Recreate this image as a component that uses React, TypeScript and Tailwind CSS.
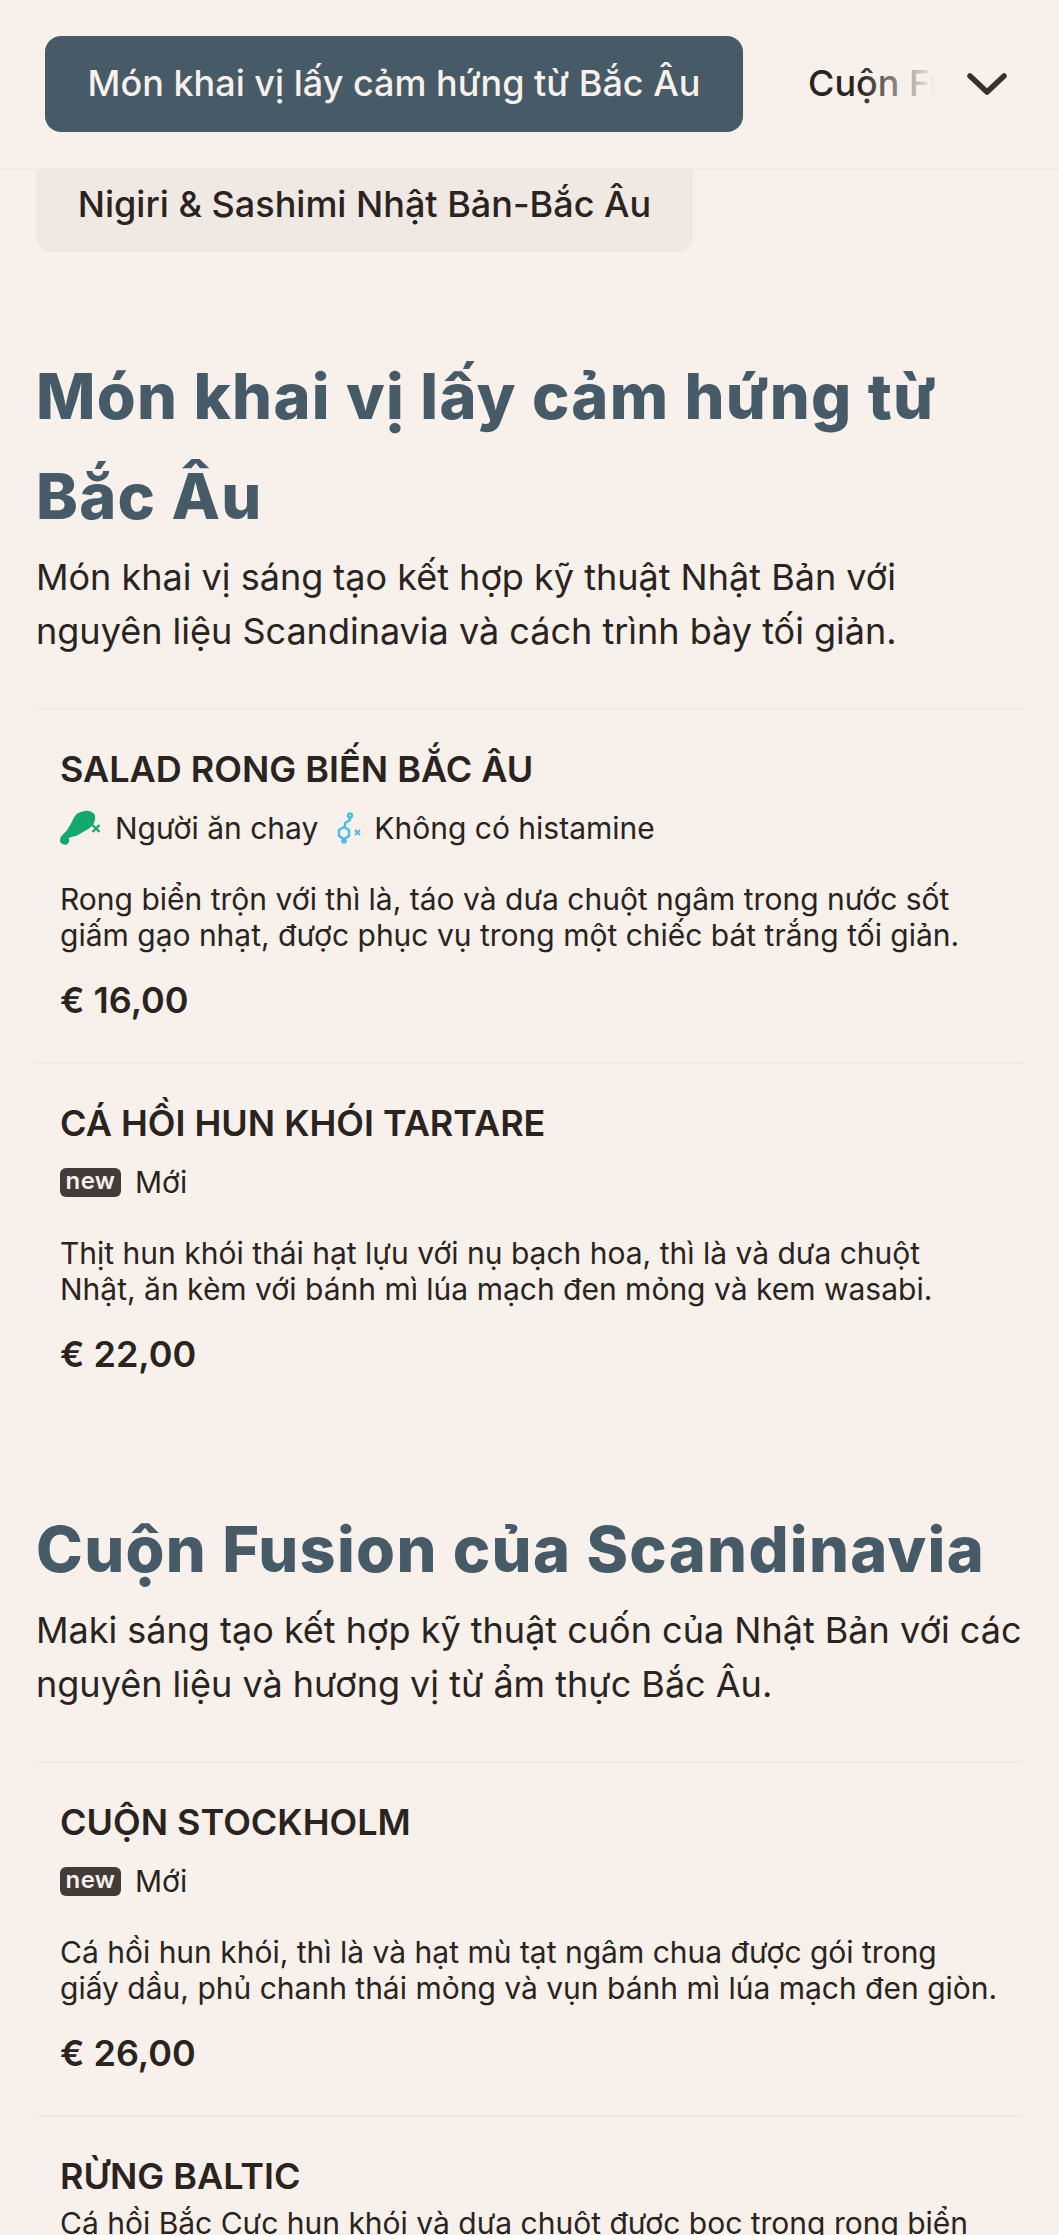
const font = "[font-family:Inter,'Noto_Sans',sans-serif]";

function Drumstick() {
  return (
    <svg width="42" height="36" viewBox="0 0 42 36" className="shrink-0">
      <path
        fill="#12a86e"
        d="M21.7 1.7C25 0.5 28 0.5 30 1.3C33 2.5 35 4 35 6.3C35.5 9 35 12 33.3 14C32 16 30 18 28.3 19C24 21 20 24 16.7 25.7C14 26.5 11 27 8.3 28C9 28.5 9.5 29.5 9.3 30.7C9 33 7 35 5 34.7C2.5 34.5 0 33 0 30.7C0 28.5 0.5 27 1.7 25.7C3 24 5 22.5 6.7 20.7C8.5 18 10 15 11.7 12.3C13 9 14.5 6 16.7 4C18 3 20 2.3 21.7 1.7Z"
      />
      <path d="M32.5 15L39.5 22M39.5 15L32.5 22" stroke="#12a86e" strokeWidth="2.4" fill="none" />
    </svg>
  );
}

function Molecule() {
  return (
    <svg width="26" height="32" viewBox="0 0 26 32" fill="none" className="shrink-0">
      <g stroke="#4bbde0" strokeWidth="2.4" strokeLinejoin="round">
        <path d="M8 15L13 18L13 24L8 27L3 24L3 18Z" />
        <path d="M9 15L9 11L14 8L14 5" />
        <circle cx="14" cy="3.5" r="2" />
        <circle cx="8" cy="29" r="1.6" />
      </g>
      <path d="M19 18L24 23M24 18L19 23" stroke="#4bbde0" strokeWidth="2" />
    </svg>
  );
}

function NewTag() {
  return (
    <div className="flex items-center gap-[14px]">
      <span className="flex h-[29px] w-[61px] items-center justify-center rounded-[6px] bg-[#433b37] pb-[2px] text-[24px] font-semibold leading-none tracking-[0.4px] text-[#f7f0eb]">
        new
      </span>
      <span>Mới</span>
    </div>
  );
}

function Dish({
  name,
  tags,
  desc,
  price,
}: {
  name: string;
  tags: React.ReactNode;
  desc: string[];
  price: string;
}) {
  return (
    <div className="border-t-2 border-[#f0e9e4] px-6 pt-[37px] pb-[40px]">
      <h3 className="text-[36px] font-semibold leading-[44px] text-[#2a2320]">{name}</h3>
      <div className="mt-[19px] flex h-[36px] items-center text-[30px] text-[#2a2320]">{tags}</div>
      <p className="mt-[35px] text-[30px] leading-[36px] text-[#2a2320]">
        {desc.map((d) => (
          <span key={d} className="block whitespace-nowrap">
            {d}
          </span>
        ))}
      </p>
      <div className="mt-[25px] text-[36px] font-semibold leading-[44px] text-[#2a2320]">{price}</div>
    </div>
  );
}

export default function App() {
  return (
    <div className={`h-[2235px] overflow-hidden bg-[#f7f0eb] ${font}`}>
      <header className="relative flex h-[170px] items-center overflow-hidden border-b-2 border-[#f1eae5] pl-[45px]">
        <div className="flex h-[96px] w-[698px] shrink-0 items-center justify-center rounded-[16px] bg-[#465a68] pb-[3px] text-[36px] font-medium whitespace-nowrap text-[#f7f0eb]">
          Món khai vị lấy cảm hứng từ Bắc Âu
        </div>
        <div className="ml-[65px] pb-[3px] text-[36px] font-medium whitespace-nowrap text-[#2a2320]">
          Cuộn Fusion của Scandinavia
        </div>
        <div className="absolute top-0 right-0 flex h-[168px] w-[199px]">
          <div className="h-full w-[76px] bg-gradient-to-r from-transparent to-[#f7f0eb]" />
          <div className="flex h-full flex-1 items-center bg-[#f7f0eb] pl-[31px]">
            <svg width="40" height="22" viewBox="0 0 40 22" fill="none">
              <path d="M3 3L20 19L37 3" stroke="#38322f" strokeWidth="5.5" strokeLinecap="round" strokeLinejoin="round" />
            </svg>
          </div>
        </div>
      </header>

      <main className="px-9">
        <div className="flex h-[82px] w-[657px] items-center justify-center rounded-b-[16px] bg-[#f0e8e3] pb-[15px] text-[36px] font-medium whitespace-nowrap text-[#2a2320]">
          Nigiri &amp; Sashimi Nhật Bản-Bắc Âu
        </div>

        <section className="mt-[94px]">
          <h2 className="text-[63px] font-extrabold leading-[100px] tracking-[1.3px] text-[#465a68]">
            Món khai vị lấy cảm hứng từ
            <br />
            Bắc Âu
          </h2>
          <p className="mt-[4px] text-[36px] leading-[54px] text-[#2a2320]">
            Món khai vị sáng tạo kết hợp kỹ thuật Nhật Bản với
            <br />
            nguyên liệu Scandinavia và cách trình bày tối giản.
          </p>
          <div className="mt-[50px]">
            <Dish
              name="SALAD RONG BIẾN BẮC ÂU"
              tags={
                <>
                  <Drumstick />
                  <span className="ml-[13px]">Người ăn chay</span>
                  <span className="ml-[18px]">
                    <Molecule />
                  </span>
                  <span className="ml-[12px]">Không có histamine</span>
                </>
              }
              desc={[
                "Rong biển trộn với thì là, táo và dưa chuột ngâm trong nước sốt",
                "giấm gạo nhạt, được phục vụ trong một chiếc bát trắng tối giản.",
              ]}
              price="€ 16,00"
            />
            <Dish
              name="CÁ HỒI HUN KHÓI TARTARE"
              tags={<NewTag />}
              desc={[
                "Thịt hun khói thái hạt lựu với nụ bạch hoa, thì là và dưa chuột",
                "Nhật, ăn kèm với bánh mì lúa mạch đen mỏng và kem wasabi.",
              ]}
              price="€ 22,00"
            />
          </div>
        </section>

        <section className="mt-[83px]">
          <h2 className="text-[63px] font-extrabold leading-[100px] tracking-[1.3px] whitespace-nowrap text-[#465a68]">
            Cuộn Fusion của Scandinavia
          </h2>
          <p className="mt-[4px] text-[36px] leading-[54px] whitespace-nowrap text-[#2a2320]">
            Maki sáng tạo kết hợp kỹ thuật cuốn của Nhật Bản với các
            <br />
            nguyên liệu và hương vị từ ẩm thực Bắc Âu.
          </p>
          <div className="mt-[50px]">
            <Dish
              name="CUỘN STOCKHOLM"
              tags={<NewTag />}
              desc={[
                "Cá hồi hun khói, thì là và hạt mù tạt ngâm chua được gói trong",
                "giấy dầu, phủ chanh thái mỏng và vụn bánh mì lúa mạch đen giòn.",
              ]}
              price="€ 26,00"
            />
            <div className="border-t-2 border-[#f0e9e4] px-6 pt-[37px]">
              <h3 className="text-[36px] font-semibold leading-[44px] text-[#2a2320]">RỪNG BALTIC</h3>
              <p className="mt-[7px] text-[30px] leading-[36px] whitespace-nowrap text-[#2a2320]">
                Cá hồi Bắc Cực hun khói và dưa chuột được bọc trong rong biển
              </p>
            </div>
          </div>
        </section>
      </main>
    </div>
  );
}
